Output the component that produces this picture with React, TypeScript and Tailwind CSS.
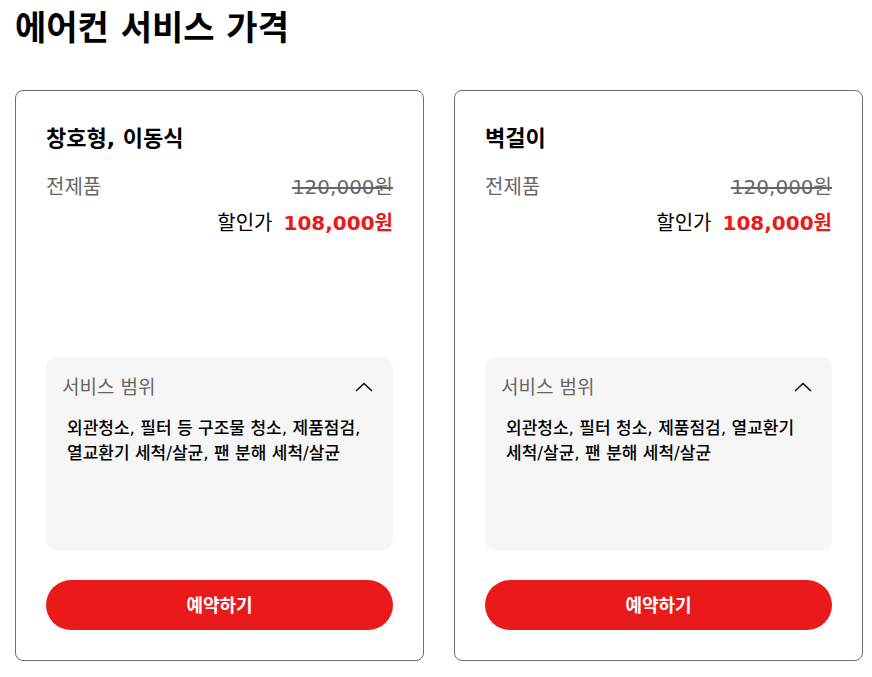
const FONT = { fontFamily: '"DejaVu Sans", "Noto Sans CJK KR", sans-serif' };

function ChevronUp() {
  return (
    <svg width="18" height="10" viewBox="0 0 18 10" fill="none" className="shrink-0">
      <polyline points="1,9 9,1.5 17,9" stroke="#111" strokeWidth="1.6" />
    </svg>
  );
}

function PriceCard({ title, scope }: { title: string; scope: string }) {
  return (
    <div className="flex h-[571px] flex-col rounded-lg border border-[#6e6e6e] px-[30px] pb-[30px] pt-[31px]">
      <h3 className="text-[22px] font-bold leading-[34px] text-black">{title}</h3>
      <div className="mt-[17px] flex items-center justify-between">
        <span className="text-[20px] leading-[28px] text-[#666]">전제품</span>
        <span className="text-[20px] leading-[28px] text-[#666] line-through">120,000원</span>
      </div>
      <div className="mt-[7px] flex items-center justify-end gap-[11px]">
        <span className="text-[20px] leading-[30px] text-black">할인가</span>
        <span className="text-[20px] font-bold leading-[30px] text-[#ea1a1a]">108,000원</span>
      </div>
      <div className="mt-auto h-[193px] rounded-[10px] bg-[#f6f6f6] px-4 pt-[14px]">
        <div className="flex items-center justify-between pr-[4px]">
          <span className="text-[19px] leading-[32px] text-[#666]">서비스 범위</span>
          <ChevronUp />
        </div>
        <p className="mt-[13px] break-keep pl-[5px] pr-[10px] text-[17px] font-medium leading-[25px] text-black">
          {scope}
        </p>
      </div>
      <button className="mt-[30px] h-[50px] w-full rounded-full bg-[#ea1a1a] text-[18px] font-bold text-white">
        예약하기
      </button>
    </div>
  );
}

export default function App() {
  return (
    <div className="min-h-screen bg-white pl-[15px] pt-[4px]" style={FONT}>
      <h1 className="text-[34px] font-bold leading-[48px] text-black">에어컨 서비스 가격</h1>
      <div className="mt-[38px] grid w-[848px] grid-cols-2 gap-[30px]">
        <PriceCard
          title="창호형, 이동식"
          scope="외관청소, 필터 등 구조물 청소, 제품점검, 열교환기 세척/살균, 팬 분해 세척/살균"
        />
        <PriceCard
          title="벽걸이"
          scope="외관청소, 필터 청소, 제품점검, 열교환기 세척/살균, 팬 분해 세척/살균"
        />
      </div>
    </div>
  );
}
